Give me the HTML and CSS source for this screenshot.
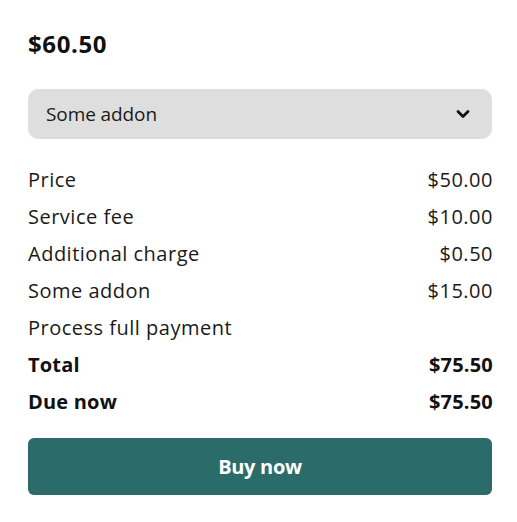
FILE: index.html
```html
<!DOCTYPE html>
<html>
<head>
<meta charset="utf-8">
<link rel="stylesheet" href="styles.css">
</head>
<body>
<div class="card">
  <h1 class="price">$60.50</h1>
  <div class="select">
    <span>Some addon</span>
    <svg class="chev" width="14" height="10" viewBox="0 0 14 10"><path d="M2 2.5 L7 7.5 L12 2.5" fill="none" stroke="#111" stroke-width="2.8" stroke-linecap="round" stroke-linejoin="round"/></svg>
  </div>
  <div class="rows">
    <div class="row"><span>Price</span><span>$50.00</span></div>
    <div class="row"><span>Service fee</span><span>$10.00</span></div>
    <div class="row"><span>Additional charge</span><span>$0.50</span></div>
    <div class="row"><span>Some addon</span><span>$15.00</span></div>
    <div class="row"><span>Process full payment</span><span></span></div>
    <div class="row bold"><span>Total</span><span>$75.50</span></div>
    <div class="row bold"><span>Due now</span><span>$75.50</span></div>
  </div>
  <button class="buy">Buy now</button>
</div>
</body>
</html>
```
FILE: styles.css
```css
* { box-sizing: border-box; }
body {
  margin: 0;
  background: #fff;
  font-family: "Open Sans", "Lato", sans-serif;
  color: #1a1a1a;
}
.card {
  padding: 28px 25px 0 28px;
  display: flex;
  flex-direction: column;
}
.price {
  margin: 0;
  font-size: 24px;
  font-weight: 700;
  line-height: 31px;
  color: #111;
  letter-spacing: 0.6px;
}
.select {
  margin-top: 30px;
  height: 50px;
  background: #dedede;
  border-radius: 10px;
  display: flex;
  align-items: center;
  justify-content: space-between;
  padding: 0 22px 0 18px;
  font-size: 19px;
  letter-spacing: -0.1px;
}
.rows {
  margin-top: 22px;
  display: flex;
  flex-direction: column;
}
.row {
  display: flex;
  justify-content: space-between;
  font-size: 20px;
  line-height: 37px;
  letter-spacing: 0.5px;
}
.row span:last-child { margin-right: -1px; }
.row.bold { font-weight: 700; color: #111; letter-spacing: 0.2px; }
.buy {
  margin-top: 18px;
  height: 57px;
  border: none;
  border-radius: 6px;
  background: #2b6b69;
  color: #fff;
  font-family: inherit;
  font-size: 20px;
  font-weight: 700;
  letter-spacing: -0.3px;
}
```
